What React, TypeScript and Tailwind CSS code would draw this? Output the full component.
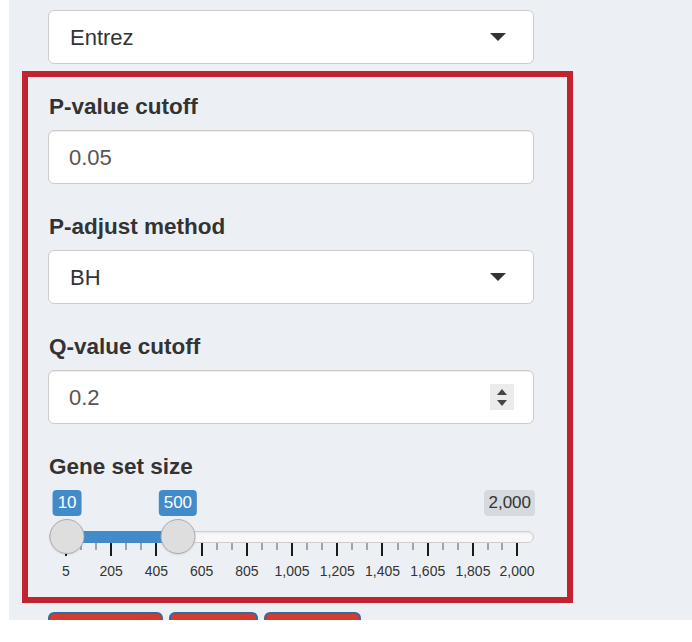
import React from 'react';

// value -> x offset inside the slider box (5..2000 spread over 451px)
const pos = (v: number) => 18 + ((v - 5) * 451) / 1995;

const majors = [5, 205, 405, 605, 805, 1005, 1205, 1405, 1605, 1805, 2000];
const fmt = (v: number) => v.toLocaleString('en-US');

const Caret = () => (
  <svg width="16" height="8" viewBox="0 0 16 8" className="shrink-0">
    <path d="M0 0h16L8 8z" fill="#333" />
  </svg>
);

const Label = ({ children }: { children: React.ReactNode }) => (
  <div className="text-[22.5px] font-bold leading-[31px] text-[#333] mb-[8px] pl-[1px]">{children}</div>
);

const Select = ({ value }: { value: string }) => (
  <div className="h-[54px] w-[486px] bg-white border border-[#cccccc] rounded-[6px] flex items-center justify-between pl-[21px] pr-[27px] text-[22px] text-[#333]">
    <span>{value}</span>
    <Caret />
  </div>
);

const TextInput = ({ value, spinner = false }: { value: string; spinner?: boolean }) => (
  <div className="h-[54px] w-[486px] bg-white border border-[#cccccc] rounded-[6px] shadow-[inset_0_1px_1px_rgba(0,0,0,0.075)] flex items-center justify-between pl-[20px] text-[22px] text-[#555]">
    <span>{value}</span>
    {spinner && (
      <div className="mr-[19px] w-[24px] h-[26px] bg-[#ebebeb] flex flex-col items-center justify-center gap-[5px]">
        <svg width="10" height="6" viewBox="0 0 10 6">
          <path d="M5 0L10 6H0z" fill="#444" />
        </svg>
        <svg width="10" height="6" viewBox="0 0 10 6">
          <path d="M0 0h10L5 6z" fill="#444" />
        </svg>
      </div>
    )}
  </div>
);

// ion.rangeSlider style double slider
const RangeSlider = ({ from, to }: { from: number; to: number }) => {
  const ticks: { x: number; major: boolean }[] = [];
  majors.forEach((v, i) => {
    ticks.push({ x: pos(v), major: true });
    if (i < majors.length - 1) {
      const a = pos(v);
      const b = pos(majors[i + 1]);
      ticks.push({ x: a + (b - a) / 3, major: false });
      ticks.push({ x: a + ((b - a) * 2) / 3, major: false });
    }
  });

  return (
    <div className="relative h-[89px] w-[486px]">
      {ticks.map((t, i) => (
        <div
          key={i}
          className={
            t.major
              ? 'absolute top-[53px] h-[13px] w-[2px] -translate-x-1/2 bg-[#1a1a1a]'
              : 'absolute top-[53px] h-[7px] w-[2px] -translate-x-1/2 bg-[#a3a3a3]'
          }
          style={{ left: t.x }}
        />
      ))}
      {majors.map((v) => (
        <div
          key={v}
          className="absolute top-[73px] -translate-x-1/2 text-[14px] leading-[16px] text-[#333] whitespace-nowrap"
          style={{ left: pos(v) }}
        >
          {fmt(v)}
        </div>
      ))}

      <div className="absolute left-[1px] top-[41px] h-[12px] w-[485px] rounded-full border border-[#cfcfcf] bg-[#f8f8f8] shadow-[inset_0_1px_2px_rgba(0,0,0,0.08)]" />
      <div
        className="absolute top-[41px] h-[12px] bg-[#428bca]"
        style={{ left: pos(from), width: pos(to) - pos(from) }}
      />

      {[from, to].map((v) => (
        <div
          key={v}
          className="absolute top-[29px] h-[35px] w-[35px] -translate-x-1/2 rounded-full bg-[#dedede] border border-[#acacac] shadow-[0_1px_2px_rgba(0,0,0,0.1)]"
          style={{ left: pos(v) }}
        />
      ))}

      {[from, to].map((v) => (
        <div
          key={v}
          className="absolute top-0 h-[26px] -translate-x-1/2 rounded-[4px] bg-[#428bca] px-[5px] text-[17px] leading-[26px] text-white"
          style={{ left: pos(v) }}
        >
          {fmt(v)}
        </div>
      ))}
      <div className="absolute top-0 right-[-1px] h-[26px] rounded-[4px] bg-[#d6d9dd] px-[4px] text-[17px] leading-[26px] text-[#333]">
        2,000
      </div>
    </div>
  );
};

export default function App() {
  return (
    <div className="w-[692px] h-[642px] bg-white overflow-hidden font-['Liberation_Sans',Arial,sans-serif]">
      <div className="ml-[9px] w-[683px] h-[620px] bg-[#ecf0f5] overflow-hidden pt-[10px] pl-[13px]">
        <div className="pl-[26px]">
          <Select value="Entrez" />
        </div>

        <div className="mt-[7px] w-[551px] border-[6px] border-[#c1242f] pt-[14px] pb-[18px] pl-[20px] flex flex-col gap-[27px]">
          <div>
            <Label>P-value cutoff</Label>
            <TextInput value="0.05" />
          </div>
          <div>
            <Label>P-adjust method</Label>
            <Select value="BH" />
          </div>
          <div>
            <Label>Q-value cutoff</Label>
            <TextInput value="0.2" spinner />
          </div>
          <div>
            <Label>Gene set size</Label>
            <RangeSlider from={10} to={500} />
          </div>
        </div>

        <div className="flex pl-[26px] mt-[9px] gap-[6px]">
          <div className="h-[40px] w-[115px] rounded-[6px] border-2 border-[#2d6ca5] bg-[#d63a2c]" />
          <div className="h-[40px] w-[89px] rounded-[6px] border-2 border-[#2d6ca5] bg-[#d63a2c]" />
          <div className="h-[40px] w-[97px] rounded-[6px] border-2 border-[#2d6ca5] bg-[#d63a2c]" />
        </div>
      </div>
    </div>
  );
}
